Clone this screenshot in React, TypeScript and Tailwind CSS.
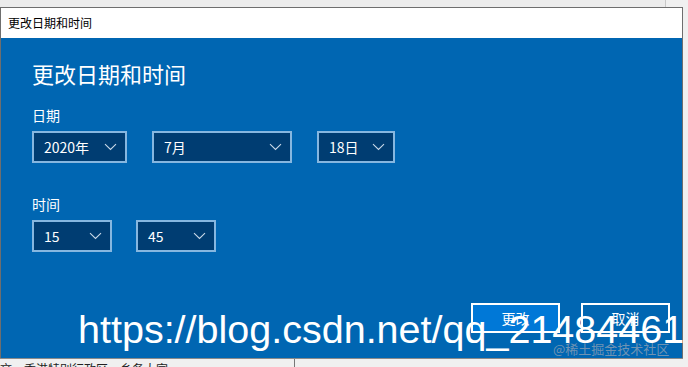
import React from "react";

const cjk = { fontFamily: '"Noto Sans CJK SC", "Noto Sans", sans-serif' };

function Chevron() {
  return (
    <svg width="13" height="8" viewBox="0 0 13 8" className="shrink-0">
      <path d="M1 1.2 L6.5 6.5 L12 1.2" fill="none" stroke="#c8d8e8" strokeWidth="1.1" />
    </svg>
  );
}

function Select({ label, w }: { label: string; w: string }) {
  return (
    <div className={`${w} h-[32px] bg-[#003d72] border-2 border-[#86b7e0] flex items-center justify-between pl-[10px] pr-[8px] text-white text-[14px]`}>
      <span>{label}</span>
      <Chevron />
    </div>
  );
}

export default function App() {
  return (
    <div className="w-[688px] h-[367px] bg-[#f0f0f0] relative overflow-hidden" style={cjk}>
      <div className="h-[7px] flex">
        <div className="w-[666px] h-full bg-[#ececec] border-r border-[#c8c8c8]" />
      </div>
      <div className="w-[683px] border border-[#6e6e6e] border-b-0">
        <div className="h-[30px] bg-white flex items-center pl-[7px] text-[12px] text-black">更改日期和时间</div>
        <div className="h-[320px] bg-[#0066b2] pl-[31px] pr-[12px] pt-[20px] flex flex-col text-white">
          <div className="text-[22px] leading-[30px]">更改日期和时间</div>
          <div className="mt-[17px] text-[14px] leading-[20px]">日期</div>
          <div className="mt-[6px] flex gap-[25px]">
            <Select label="2020年" w="w-[95px]" />
            <Select label="7月" w="w-[140px]" />
            <Select label="18日" w="w-[78px]" />
          </div>
          <div className="mt-[31px] text-[14px] leading-[20px]">时间</div>
          <div className="mt-[6px] flex gap-[24px]">
            <Select label="15" w="w-[80px]" />
            <Select label="45" w="w-[80px]" />
          </div>
          <div className="mt-[51px] flex justify-end gap-[21px]">
            <div className="w-[89px] h-[30px] bg-[#0078d7] border-2 border-white flex items-center justify-center text-[14px]">更改</div>
            <div className="w-[89px] h-[30px] border-2 border-white flex items-center justify-center text-[14px]">取消</div>
          </div>
        </div>
      </div>
      <div className="h-[1px] w-[683px] bg-[#8a8a8a]" />
      <div className="flex">
        <div className="w-[295px] h-[10px] text-[12px] leading-[16px] text-[#222] pt-[2px] whitespace-nowrap overflow-hidden border-r border-[#777]">文，香港特别行政区，乡务大家</div>
      </div>
      <div
        className="absolute left-[78px] top-[310px] text-white text-[39.5px] leading-none whitespace-nowrap"
        style={{ fontFamily: '"Liberation Sans", Arial, sans-serif' }}
      >
        https://blog.csdn.net/qq_21484461
      </div>
      <div className="absolute left-[553px] top-[340px] text-[13px] leading-[18px] text-[#a0a8b4]/70 whitespace-nowrap">@稀土掘金技术社区</div>
    </div>
  );
}
